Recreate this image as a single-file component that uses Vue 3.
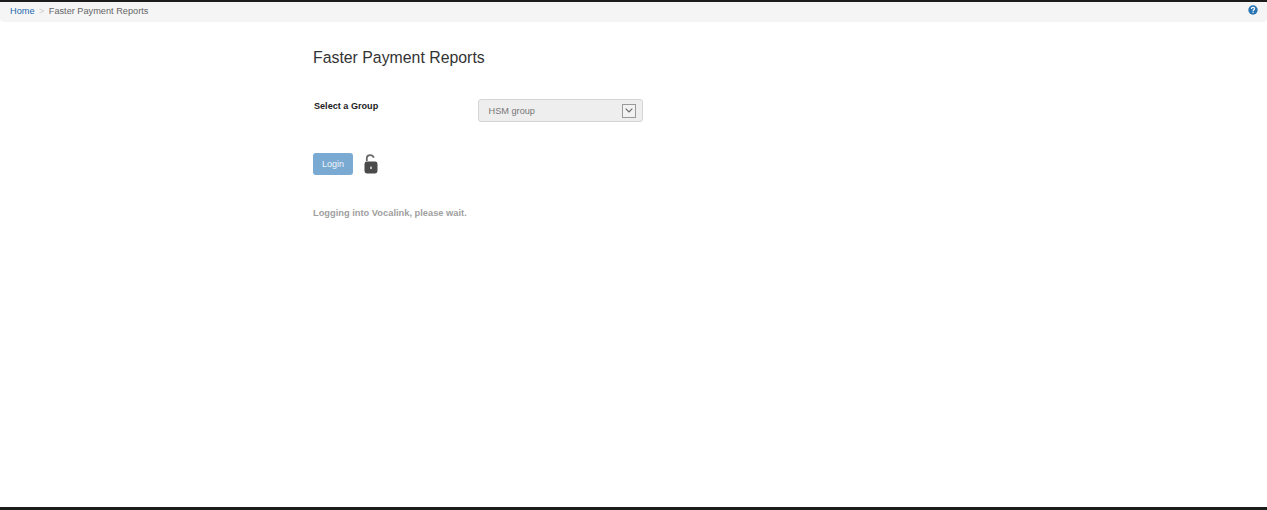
<script setup>
const crumbs = { home: 'Home', current: 'Faster Payment Reports' }
</script>

<template>
  <div class="page">
    <div class="topline"></div>
    <nav class="crumbbar">
      <div class="crumbs">
        <a class="home">{{ crumbs.home }}</a>
        <span class="sep">&gt;</span>
        <span class="current">{{ crumbs.current }}</span>
      </div>
      <svg class="help" width="10" height="10" viewBox="0 0 10 10">
        <circle cx="5" cy="5" r="4.7" fill="#2a76b4" />
        <path d="M3.4 3.9C3.4 2.9 4.1 2.4 5 2.4C5.9 2.4 6.6 2.9 6.6 3.7C6.6 4.7 5.1 4.8 5.1 5.9" fill="none" stroke="#fff" stroke-width="1.2" />
        <rect x="4.4" y="6.6" width="1.3" height="1.2" fill="#fff" />
      </svg>
    </nav>
    <main class="content">
      <h1 class="title">Faster Payment Reports</h1>
      <div class="group-row">
        <label class="group-label">Select a Group</label>
        <div class="select">
          <span>HSM group</span>
          <span class="arrow">
            <svg width="8" height="5" viewBox="0 0 8 5">
              <path d="M0.7 0.7L4 4L7.3 0.7" fill="none" stroke="#666" stroke-width="1.1" />
            </svg>
          </span>
        </div>
      </div>
      <div class="login-row">
        <button class="login" type="button">Login</button>
        <svg class="lock" width="14" height="20" viewBox="0 0 14 20">
          <path d="M2.8 7V4.4C2.8 2.4 4.2 1.2 6.2 1.2C8 1.2 9.2 2 9.8 3.6" fill="none" stroke="#6a6a6a" stroke-width="1.8" />
          <rect x="0.5" y="7.6" width="13" height="11.9" rx="2.4" fill="#4a4a4a" />
          <rect x="6.2" y="12.6" width="1.6" height="2.4" fill="#ddd" />
        </svg>
      </div>
      <p class="status">Logging into Vocalink, please wait.</p>
    </main>
    <div class="bottomline"></div>
  </div>
</template>

<style scoped>
.page {
  height: 510px;
  display: flex;
  flex-direction: column;
  background: #fff;
  font-family: "Liberation Sans", Arial, sans-serif;
  overflow: hidden;
}
.topline {
  height: 2px;
  background: #1c1c1c;
  flex: none;
}
.crumbbar {
  flex: none;
  height: 20px;
  box-sizing: border-box;
  padding: 0 10px;
  display: flex;
  justify-content: space-between;
  align-items: center;
  background: #f5f5f5;
  border-radius: 0 0 4px 4px;
  font-size: 9px;
}
.crumbs {
  display: flex;
  align-items: center;
  margin-top: -2px;
}
.home {
  color: #1f6cb0;
  font-size: 9.2px;
}
.sep {
  color: #ccc;
  margin: 0 4.5px;
}
.current {
  color: #666;
  font-size: 9.2px;
}
.help {
  margin-top: -4px;
  margin-right: -0.5px;
}
.content {
  flex: 1;
  padding: 26px 0 0 313px;
}
.title {
  margin: 0;
  font-size: 15.85px;
  font-weight: 400;
  line-height: 20px;
  color: #333;
}
.group-row {
  display: flex;
  align-items: flex-start;
  margin-top: 31px;
}
.group-label {
  width: 165px;
  padding: 1px 0 0 1px;
  box-sizing: border-box;
  font-size: 9.1px;
  font-weight: 700;
  line-height: 12px;
  color: #222;
}
.select {
  width: 165px;
  height: 23px;
  box-sizing: border-box;
  padding: 0 6.5px 0 9.5px;
  display: flex;
  justify-content: space-between;
  align-items: center;
  background: #eee;
  border: 1px solid #d4d4d4;
  border-radius: 3px;
  font-size: 9.2px;
  color: #777;
}
.arrow {
  width: 14px;
  height: 14px;
  box-sizing: border-box;
  display: flex;
  align-items: center;
  justify-content: center;
  border: 1px solid #999;
  background: #f2f2f2;
}
.login-row {
  display: flex;
  align-items: center;
  gap: 11px;
  margin-top: 31px;
}
.login {
  width: 40px;
  height: 22px;
  padding: 0;
  border: none;
  border-radius: 3px;
  background: #7aa9d2;
  color: #f0f5fa;
  font: 9px "Liberation Sans", Arial, sans-serif;
}
.status {
  margin: 32px 0 0;
  font-size: 9.3px;
  font-weight: 700;
  line-height: 12px;
  color: #a0a0a0;
}
.bottomline {
  flex: none;
  height: 3px;
  background: #1c1c1c;
}
</style>
